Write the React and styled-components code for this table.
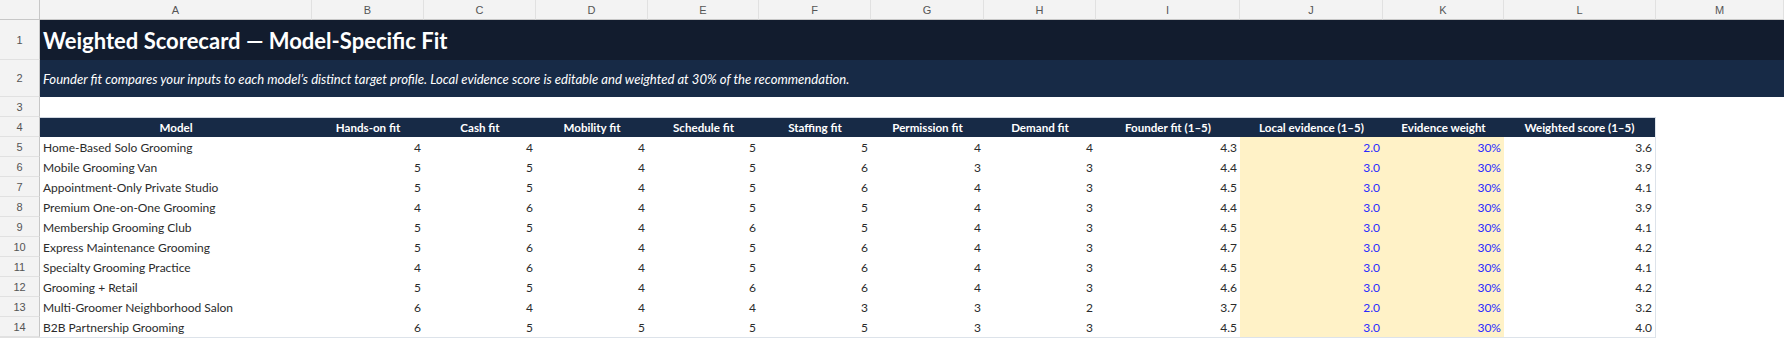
import React from 'react'
import styled, { createGlobalStyle } from 'styled-components'

const columns = ['A', 'B', 'C', 'D', 'E', 'F', 'G', 'H', 'I', 'J', 'K', 'L', 'M']
const widths = [272, 112, 112, 112, 111, 112, 113, 112, 144, 143, 121, 152, 128]

const headers = [
  'Model',
  'Hands-on fit',
  'Cash fit',
  'Mobility fit',
  'Schedule fit',
  'Staffing fit',
  'Permission fit',
  'Demand fit',
  'Founder fit (1–5)',
  'Local evidence (1–5)',
  'Evidence weight',
  'Weighted score (1–5)',
]

const rows = [
  ['Home-Based Solo Grooming', 4, 4, 4, 5, 5, 4, 4, '4.3', '2.0', '30%', '3.6'],
  ['Mobile Grooming Van', 5, 5, 4, 5, 6, 3, 3, '4.4', '3.0', '30%', '3.9'],
  ['Appointment-Only Private Studio', 5, 5, 4, 5, 6, 4, 3, '4.5', '3.0', '30%', '4.1'],
  ['Premium One-on-One Grooming', 4, 6, 4, 5, 5, 4, 3, '4.4', '3.0', '30%', '3.9'],
  ['Membership Grooming Club', 5, 5, 4, 6, 5, 4, 3, '4.5', '3.0', '30%', '4.1'],
  ['Express Maintenance Grooming', 5, 6, 4, 5, 6, 4, 3, '4.7', '3.0', '30%', '4.2'],
  ['Specialty Grooming Practice', 4, 6, 4, 5, 6, 4, 3, '4.5', '3.0', '30%', '4.1'],
  ['Grooming + Retail', 5, 5, 4, 6, 6, 4, 3, '4.6', '3.0', '30%', '4.2'],
  ['Multi-Groomer Neighborhood Salon', 6, 4, 4, 4, 3, 3, 2, '3.7', '2.0', '30%', '3.2'],
  ['B2B Partnership Grooming', 6, 5, 5, 5, 5, 3, 3, '4.5', '3.0', '30%', '4.0'],
]

const GlobalStyle = createGlobalStyle`
  * { box-sizing: border-box; }
  body {
    margin: 0;
    background: #ffffff;
    font-family: Lato, 'Noto Sans', sans-serif;
  }
`

const Sheet = styled.div`
  display: grid;
  grid-template-columns: 40px ${widths.map((w) => `${w}px`).join(' ')};
  grid-template-rows: 20px 40px 37px 20px 20px repeat(10, 20px) 1px;
  width: 1784px;
  overflow: hidden;
`

const Corner = styled.div`
  background: #f3f3f3;
  border-right: 1px solid #c7c7c7;
  border-bottom: 1px solid #c7c7c7;
`

const ColHead = styled.div`
  background: #f3f3f3;
  border-right: 1px solid #e1e1e1;
  border-bottom: 1px solid #c7c7c7;
  display: flex;
  align-items: center;
  justify-content: center;
  font-family: 'Liberation Sans', Arial, sans-serif;
  font-size: 11px;
  color: #555555;
`

const RowHead = styled.div`
  background: #f3f3f3;
  border-right: 1px solid #c7c7c7;
  border-bottom: 1px solid #e1e1e1;
  display: flex;
  align-items: center;
  justify-content: center;
  font-family: 'Liberation Sans', Arial, sans-serif;
  font-size: 11px;
  color: #555555;
`

const Banner = styled.div`
  grid-column: 2 / -1;
  display: flex;
  align-items: center;
  padding-left: 3px;
  color: #ffffff;
  background: ${(p) => (p.$sub ? '#172a46' : '#121c2e')};
  font-size: ${(p) => (p.$sub ? '13.1px' : '22px')};
  font-weight: ${(p) => (p.$sub ? 400 : 700)};
  font-style: ${(p) => (p.$sub ? 'italic' : 'normal')};
  white-space: nowrap;
`

const Blank = styled.div`
  grid-column: ${(p) => p.$span || 'auto'};
  background: #ffffff;
`

const HeadCell = styled.div`
  background: #172a46;
  color: #ffffff;
  font-weight: 700;
  font-size: 11.6px;
  display: flex;
  align-items: center;
  justify-content: center;
  white-space: nowrap;
  border-top: 1px solid #cfd6e0;
  border-right: ${(p) => (p.$last ? '1px solid #dde3ea' : 'none')};
`

const Cell = styled.div`
  display: flex;
  align-items: center;
  justify-content: ${(p) => (p.$left ? 'flex-start' : 'flex-end')};
  padding: 0 3px;
  font-size: 12px;
  color: ${(p) => (p.$input ? '#2a2aff' : '#2b2b2b')};
  background: ${(p) => (p.$input ? '#fff2c7' : '#ffffff')};
  white-space: nowrap;
  border-right: ${(p) => (p.$last ? '1px solid #dde3ea' : 'none')};
`

const BottomRule = styled.div`
  grid-column: ${(p) => p.$span};
  background: ${(p) => p.$color};
`

const App = () => {
  return (
    <>
      <GlobalStyle />
      <Sheet>
        <Corner />
        {columns.map((c) => (
          <ColHead key={c}>{c}</ColHead>
        ))}

        <RowHead>1</RowHead>
        <Banner>Weighted Scorecard — Model-Specific Fit</Banner>

        <RowHead>2</RowHead>
        <Banner $sub>
          Founder fit compares your inputs to each model’s distinct target profile. Local evidence score is
          editable and weighted at 30% of the recommendation.
        </Banner>

        <RowHead>3</RowHead>
        <Blank $span="2 / -1" />

        <RowHead>4</RowHead>
        {headers.map((h, i) => (
          <HeadCell key={h} $last={i === headers.length - 1}>
            {h}
          </HeadCell>
        ))}
        <Blank />

        {rows.map((r, ri) => (
          <React.Fragment key={r[0]}>
            <RowHead>{ri + 5}</RowHead>
            {r.map((v, ci) => (
              <Cell key={ci} $left={ci === 0} $input={ci === 9 || ci === 10} $last={ci === 11}>
                {v}
              </Cell>
            ))}
            <Blank />
          </React.Fragment>
        ))}

        <BottomRule $span="1 / 2" $color="#e1e1e1" />
        <BottomRule $span="2 / 14" $color="#dde3ea" />
        <BottomRule $span="14 / 15" $color="#ffffff" />
      </Sheet>
    </>
  )
}

export default App
